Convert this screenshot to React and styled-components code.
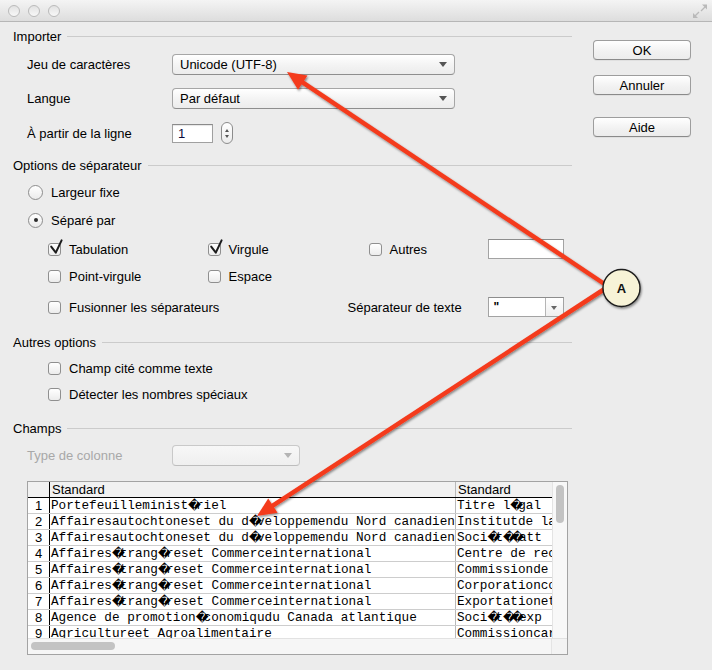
import React from "react";
import styled, { createGlobalStyle } from "styled-components";

const GlobalStyle = createGlobalStyle`
  html, body {
    margin: 0;
    padding: 0;
  }
  body {
    background: #ececec;
    font-family: "Liberation Sans", Arial, sans-serif;
    font-size: 13px;
    color: #000;
  }
`;

const Window = styled.div`
  position: relative;
  width: 712px;
  height: 670px;
  background: #ececec;
  overflow: hidden;
  border-bottom-right-radius: 5px;
`;

const TitleBar = styled.div`
  height: 21px;
  border-bottom: 1px solid #b6b6b6;
  background: linear-gradient(#f4f4f4, #dddddd);
  display: flex;
  align-items: center;
  padding: 0 4px 0 8px;
  gap: 8px;
`;

const Light = styled.span`
  width: 12px;
  height: 12px;
  box-sizing: border-box;
  border-radius: 50%;
  border: 1px solid #bababa;
  background: linear-gradient(#e2e2e2, #f8f8f8);
`;

const Resize = styled.svg`
  margin-left: auto;
  width: 16px;
  height: 16px;
`;

const Body = styled.div`
  display: flex;
  padding: 4px 0 0 13px;
`;

const Main = styled.div`
  width: 559px;
  display: flex;
  flex-direction: column;
`;

const Side = styled.div`
  margin-left: 21px;
  padding-top: 14px;
  display: flex;
  flex-direction: column;
`;

const Button = styled.div`
  width: 98px;
  height: 20px;
  box-sizing: border-box;
  margin-top: ${(p) => p.$mt || 0}px;
  border: 1px solid #9d9d9d;
  border-bottom-color: #8a8a8a;
  border-radius: 4px;
  background: linear-gradient(#ffffff, #f1f1f1 60%, #ececec);
  box-shadow: 0 1px 0 rgba(0, 0, 0, 0.05);
  display: flex;
  align-items: center;
  justify-content: center;
  font-size: 13px;
`;

const Heading = styled.div`
  display: flex;
  align-items: center;
  gap: 6px;
  height: 20px;
  margin-top: ${(p) => p.$mt}px;

  &::after {
    content: "";
    flex: 1;
    height: 1px;
    background: #cbcbcb;
  }
`;

const Row = styled.div`
  display: flex;
  align-items: center;
  height: ${(p) => p.$h || 20}px;
  margin-top: ${(p) => p.$mt}px;
  padding-left: ${(p) => p.$indent || 0}px;
`;

const Label = styled.span`
  width: 145px;
  flex: none;
  color: ${(p) => (p.$disabled ? "#a8a8a8" : "#000")};
`;

const Select = styled.div`
  position: relative;
  width: ${(p) => p.$w}px;
  height: 21px;
  box-sizing: border-box;
  border: 1px solid ${(p) => (p.$disabled ? "#c9c9c9" : "#a6a6a6")};
  border-bottom-color: ${(p) => (p.$disabled ? "#bdbdbd" : "#8e8e8e")};
  border-radius: 4px;
  background: ${(p) =>
    p.$disabled
      ? "linear-gradient(#f7f7f7, #efefef)"
      : "linear-gradient(#ffffff, #f3f3f3 55%, #ececec)"};
  display: flex;
  align-items: center;
  padding-left: 7px;

  &::after {
    content: "";
    position: absolute;
    right: 7px;
    top: 7px;
    border-left: 4px solid transparent;
    border-right: 4px solid transparent;
    border-top: 5px solid ${(p) => (p.$disabled ? "#b4b4b4" : "#555")};
  }
`;

const NumberInput = styled.div`
  width: 41px;
  height: 19px;
  box-sizing: border-box;
  border: 1px solid #a0a0a0;
  border-top-color: #8a8a8a;
  background: #fff;
  box-shadow: inset 0 1px 1px rgba(0, 0, 0, 0.1);
  display: flex;
  align-items: center;
  padding-left: 5px;
  color: #0a0a3a;
`;

const Stepper = styled.div`
  margin-left: 8px;
  width: 12px;
  height: 22px;
  box-sizing: border-box;
  border: 1px solid #8c8c8c;
  border-radius: 6px;
  background: linear-gradient(#ffffff, #ececec);
  display: flex;
  flex-direction: column;
  align-items: center;
  justify-content: center;
  gap: 3px;
`;

const Tri = styled.span`
  width: 0;
  height: 0;
  border-left: 2.5px solid transparent;
  border-right: 2.5px solid transparent;
  ${(p) =>
    p.$up ? "border-bottom: 3px solid #555;" : "border-top: 3px solid #555;"}
`;

const Radio = styled.span`
  width: 15px;
  height: 15px;
  box-sizing: border-box;
  border-radius: 50%;
  border: 1px solid #8d8d8d;
  background: linear-gradient(#ffffff, #ebebeb);
  display: flex;
  align-items: center;
  justify-content: center;
  margin-right: 8px;

  &::after {
    content: "";
    width: 4px;
    height: 4px;
    border-radius: 50%;
    background: ${(p) => (p.$on ? "#2c2c2c" : "transparent")};
  }
`;

const Box = styled.span`
  position: relative;
  flex: none;
  width: 13px;
  height: 13px;
  box-sizing: border-box;
  border: 1px solid #8f8f8f;
  border-radius: 3px;
  background: linear-gradient(#ffffff, #ececec);
  margin-right: 8px;
`;

const Tick = styled.svg`
  position: absolute;
  left: 0;
  top: -5px;
  overflow: visible;
`;

const OptionGrid = styled.div`
  display: grid;
  grid-template-columns: 159.5px 140px 140px 76px;
  margin-top: ${(p) => p.$mt}px;
  padding-left: 35px;
  height: 20px;
  align-items: center;
`;

const Cell = styled.div`
  display: flex;
  align-items: center;
  padding-left: ${(p) => p.$pad || 0}px;
  grid-column: ${(p) => p.$span || "auto"};
`;

const TextField = styled.div`
  position: relative;
  width: 76px;
  height: 20px;
  box-sizing: border-box;
  border: 1px solid #a3a3a3;
  border-top-color: #8d8d8d;
  background: #fff;
  display: flex;
  align-items: center;
  padding-left: 5px;
  font-size: 12px;
  font-weight: bold;
`;

const ComboButton = styled.span`
  position: absolute;
  right: 0;
  top: 0;
  bottom: 0;
  width: 17px;
  border-left: 1px solid #b5b5b5;
  border-radius: 0 3px 3px 0;
  background: linear-gradient(#ffffff, #efefef);

  &::after {
    content: "";
    position: absolute;
    left: 5px;
    top: 8px;
    border-left: 3.5px solid transparent;
    border-right: 3.5px solid transparent;
    border-top: 4px solid #666;
  }
`;

const TableBox = styled.div`
  margin: 15px 0 0 14px;
  width: 541px;
  height: 174px;
  box-sizing: border-box;
  border: 1px solid #a3a3a3;
  background: #fff;
  display: flex;
  flex-direction: column;
`;

const TableTop = styled.div`
  display: flex;
  height: 156px;
`;

const GridArea = styled.div`
  flex: 1;
  overflow: hidden;
`;

const TRow = styled.div`
  display: flex;
  height: 16px;
  box-sizing: border-box;
  border-bottom: 1px solid ${(p) => (p.$head ? "#000" : "#cdcdcd")};
  background: ${(p) => (p.$head ? "#f1f1f1" : "#fff")};
`;

const NumCell = styled.div`
  width: 21px;
  flex: none;
  border-right: 1px solid #000;
  text-align: center;
  font-size: 13px;
  line-height: 15px;
`;

const DataCell = styled.div`
  width: ${(p) => p.$w}px;
  flex: none;
  overflow: hidden;
  white-space: pre;
  border-right: ${(p) => (p.$last ? "none" : "1px solid #b9b9b9")};
  padding-left: ${(p) => (p.$head ? 2 : 1)}px;
  box-sizing: border-box;
  font-family: ${(p) =>
    p.$head
      ? `"Liberation Sans", Arial, sans-serif`
      : `"Liberation Mono", "DejaVu Sans Mono", monospace`};
  font-size: ${(p) => (p.$head ? "13px" : "12.7px")};
  line-height: 15px;
`;

/* the unknown-byte marker drawn one monospace cell wide */
const Bad = styled.span`
  display: inline-block;
  width: 1ch;
  overflow: visible;
  text-align: center;
  font-family: "DejaVu Sans", sans-serif;
  font-size: 12.5px;
  line-height: 15px;
  vertical-align: top;
  letter-spacing: -1px;
`;

const VScroll = styled.div`
  width: 15px;
  flex: none;
  border-left: 1px solid #e4e4e4;
  background: #f8f8f8;
  box-sizing: border-box;
  padding: 3px 0 0 3px;
`;

const VThumb = styled.div`
  width: 8px;
  height: 38px;
  border-radius: 4px;
  background: #c3c3c3;
`;

const TableBottom = styled.div`
  display: flex;
  height: 16px;
  border-top: 1px solid #e2e2e2;
  box-sizing: border-box;
`;

const HScroll = styled.div`
  flex: 1;
  background: #f6f6f6;
  padding: 3px 0 0 3px;
`;

const HThumb = styled.div`
  width: 84px;
  height: 8px;
  border-radius: 4px;
  background: #c3c3c3;
`;

const Corner = styled.div`
  width: 15px;
  background: #f3f3f3;
  border-left: 1px solid #e4e4e4;
`;

const Overlay = styled.svg`
  position: absolute;
  left: 0;
  top: 0;
  pointer-events: none;
`;

const Check = ({ on, children }) => (
  <>
    <Box>
      {on && (
        <Tick width="14" height="16" viewBox="0 0 14 16">
          <path
            d="M2.2 7.6 L6.8 13.6 L12.6 1.4"
            fill="none"
            stroke="#1c1c1c"
            strokeWidth="2"
            strokeLinecap="round"
            strokeLinejoin="round"
          />
        </Tick>
      )}
    </Box>
    <span>{children}</span>
  </>
);

// "~" marks where the file had a byte the decoder could not read
const Mono = ({ text }) =>
  text.split("~").map((part, i) => (
    <React.Fragment key={i}>
      {i > 0 && <Bad>{"\uFFFD"}</Bad>}
      {part}
    </React.Fragment>
  ));

const affaires = "Affaires~trang~reset Commerceinternational";
const autochtones = "Affairesautochtoneset du d~veloppemendu Nord canadien";
const rows = [
  ["Portefeuilleminist~riel", "Titre l~gal"],
  [autochtones, "Institutde la"],
  [autochtones, "Soci~t~~att"],
  [affaires, "Centre de rech"],
  [affaires, "Commissionde "],
  [affaires, "Corporationco"],
  [affaires, "Exportationet"],
  ["Agence de promotion~conomiqudu Canada atlantique", "Soci~t~~exp"],
  ["Agricultureet Agroalimentaire", "Commissioncar"],
];

const arrowHead = (tx, ty, fx, fy) => {
  const dx = tx - fx;
  const dy = ty - fy;
  const len = Math.hypot(dx, dy);
  const ux = dx / len;
  const uy = dy / len;
  const bx = tx - ux * 19;
  const by = ty - uy * 19;
  const px = -uy * 8.5;
  const py = ux * 8.5;
  return {
    base: [bx + ux * 2, by + uy * 2],
    points: `${tx},${ty} ${bx + px},${by + py} ${bx - px},${by - py}`,
  };
};

const Callout = () => {
  const a1 = arrowHead(287, 72, 603, 284);
  const a2 = arrowHead(257, 516, 603, 289);
  return (
    <Overlay width="712" height="670" viewBox="0 0 712 670">
      <defs>
        <filter id="sh" x="-20%" y="-20%" width="140%" height="140%">
          <feDropShadow dx="1" dy="1.5" stdDeviation="1.2" floodOpacity="0.45" />
        </filter>
      </defs>
      <g filter="url(#sh)" fill="#f43a1d" stroke="none">
        <line x1="606" y1="285" x2={a1.base[0]} y2={a1.base[1]} stroke="#f43a1d" strokeWidth="4.5" />
        <polygon points={a1.points} />
        <line x1="606" y1="288" x2={a2.base[0]} y2={a2.base[1]} stroke="#f43a1d" strokeWidth="4.5" />
        <polygon points={a2.points} />
      </g>
      <circle cx="621.5" cy="288" r="18.5" fill="#f7f3d7" stroke="#1a1a1a" strokeWidth="1.4" filter="url(#sh)" />
      <text
        x="621.5"
        y="292.5"
        textAnchor="middle"
        fontFamily="Liberation Sans, Arial, sans-serif"
        fontSize="13"
        fontWeight="bold"
        fill="#111"
      >
        A
      </text>
    </Overlay>
  );
};

const App = () => (
  <Window>
    <GlobalStyle />
    <TitleBar>
      <Light />
      <Light />
      <Light />
      <Resize viewBox="0 0 16 16">
        <g fill="#b9b9b9" stroke="#b9b9b9" strokeWidth="1.2">
          <line x1="9" y1="8" x2="13" y2="4" />
          <polygon points="15,1.5 15,6.5 10,1.5" stroke="none" />
          <line x1="7" y1="9" x2="3" y2="13" />
          <polygon points="1,15 1,10 6,15" stroke="none" />
        </g>
      </Resize>
    </TitleBar>
    <Body>
      <Main>
        <Heading $mt={0}>Importer</Heading>
        <Row $mt={8} $h={21} $indent={14}>
          <Label>Jeu de caractères</Label>
          <Select $w={283}>Unicode (UTF-8)</Select>
        </Row>
        <Row $mt={13} $h={21} $indent={14}>
          <Label>Langue</Label>
          <Select $w={283}>Par défaut</Select>
        </Row>
        <Row $mt={13} $h={22} $indent={14}>
          <Label>À partir de la ligne</Label>
          <NumberInput>1</NumberInput>
          <Stepper>
            <Tri $up />
            <Tri />
          </Stepper>
        </Row>

        <Heading $mt={11}>Options de séparateur</Heading>
        <Row $mt={7} $indent={15}>
          <Radio />
          <span>Largeur fixe</span>
        </Row>
        <Row $mt={8} $indent={15}>
          <Radio $on />
          <span>Séparé par</span>
        </Row>
        <OptionGrid $mt={9}>
          <Cell>
            <Check on>Tabulation</Check>
          </Cell>
          <Cell>
            <Check on>Virgule</Check>
          </Cell>
          <Cell $pad={21}>
            <Check>Autres</Check>
          </Cell>
          <Cell>
            <TextField />
          </Cell>
        </OptionGrid>
        <OptionGrid $mt={7}>
          <Cell>
            <Check>Point-virgule</Check>
          </Cell>
          <Cell>
            <Check>Espace</Check>
          </Cell>
        </OptionGrid>
        <OptionGrid $mt={11}>
          <Cell $span="1 / 3">
            <Check>Fusionner les séparateurs</Check>
          </Cell>
          <Cell>Séparateur de texte</Cell>
          <Cell>
            <TextField>
              "
              <ComboButton />
            </TextField>
          </Cell>
        </OptionGrid>

        <Heading $mt={15}>Autres options</Heading>
        <Row $mt={6} $indent={35}>
          <Check>Champ cité comme texte</Check>
        </Row>
        <Row $mt={6} $indent={35}>
          <Check>Détecter les nombres spéciaux</Check>
        </Row>

        <Heading $mt={14}>Champs</Heading>
        <Row $mt={7} $h={21} $indent={14}>
          <Label $disabled>Type de colonne</Label>
          <Select $w={128} $disabled />
        </Row>

        <TableBox>
          <TableTop>
            <GridArea>
              <TRow $head>
                <NumCell />
                <DataCell $w={406} $head>
                  Standard
                </DataCell>
                <DataCell $w={120} $head $last>
                  Standard
                </DataCell>
              </TRow>
              {rows.map((r, i) => (
                <TRow key={i}>
                  <NumCell>{i + 1}</NumCell>
                  <DataCell $w={406}>
                    <Mono text={r[0]} />
                  </DataCell>
                  <DataCell $w={120} $last>
                    <Mono text={r[1]} />
                  </DataCell>
                </TRow>
              ))}
            </GridArea>
            <VScroll>
              <VThumb />
            </VScroll>
          </TableTop>
          <TableBottom>
            <HScroll>
              <HThumb />
            </HScroll>
            <Corner />
          </TableBottom>
        </TableBox>
      </Main>
      <Side>
        <Button>OK</Button>
        <Button $mt={15}>Annuler</Button>
        <Button $mt={22}>Aide</Button>
      </Side>
    </Body>
    <Callout />
  </Window>
);

export default App;
